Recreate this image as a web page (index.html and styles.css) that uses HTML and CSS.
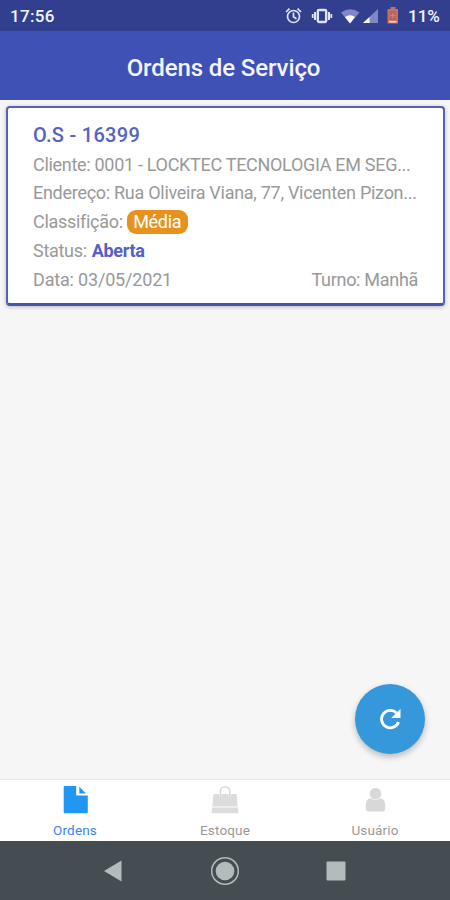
FILE: index.html
```html
<!DOCTYPE html>
<html lang="pt-BR">
<head>
<meta charset="utf-8">
<title>Ordens de Serviço</title>
<link rel="stylesheet" href="styles.css">
</head>
<body>
<div class="app">
  <div class="status">
    <span class="clock">17:56</span>
    <svg class="status-icons" width="120" height="22" viewBox="284 5 120 22">
      <g fill="none" stroke="#dfe3f6" stroke-width="1.7">
        <circle cx="293.5" cy="16.5" r="6"/>
        <path d="M293.5 12.5v4.300l3 2M286 12l3.500-3.300M301 12l-3.500-3.300"/>
        <rect x="317.800" y="10" width="8.400" height="12" rx="1.200" stroke-width="2.400"/>
        <path d="M315 12v8M329 12v8" stroke-width="2"/>
        <path d="M312.700 14v4M331.300 14v4" stroke-width="1.800"/>
      </g>
      <path d="M341 12.500Q350 6 359.500 12.500L350 23.500z" fill="#7f88c4"/>
      <path d="M345 17Q350 13.500 355 17L350 23.500z" fill="#fff"/>
      <path d="M378 9v14h-15z" fill="#7f88c4"/>
      <path d="M369.500 17v6H363z" fill="#fff"/>
      <path d="M390.500 7h5v2h2.500v14.500h-10.500V9h3z" fill="#c9705f"/>
      <path d="M389.500 11h6.500v9h-6.500z" fill="#a8676e"/>
      <path d="M390 15.500h5.500M392.750 12.700v5.600" stroke="#ee7655" stroke-width="1.400"/>
      <path d="M389 21.800h7.500" stroke="#f3ded9" stroke-width="1.400"/>
    </svg>
    <span class="battery">11%</span>
  </div>
  <header class="header"><h1 class="title">Ordens de Serviço</h1></header>
  <main class="content">
    <article class="card">
      <h2 class="order">O.S - 16399</h2>
      <p class="row client">Cliente: 0001 - LOCKTEC TECNOLOGIA EM SEG...</p>
      <p class="row address">Endereço: Rua Oliveira Viana, 77, Vicenten Pizon...</p>
      <p class="row rating"><span>Classifição:</span><span class="badge">Média</span></p>
      <p class="row state"><span>Status:</span><b class="open">Aberta</b></p>
      <p class="row foot"><span class="date">Data: 03/05/2021</span><span class="shift">Turno: Manhã</span></p>
    </article>
    <button class="fab" aria-label="Atualizar">
      <svg width="24" height="24" viewBox="0 0 24 24">
        <path d="M20.500 15A8.700 8.700 0 1 1 18.500 6" fill="none" stroke="#fff" stroke-width="2.900"/>
        <path d="M22.500 1.800v9.200h-9.200z" fill="#fff"/>
      </svg>
    </button>
  </main>
  <nav class="tabs">
    <div class="tab active">
      <svg width="30" height="30" viewBox="0 0 30 30">
        <path d="M4.700 1h11.500v9.600h11.600V27.300q0 1-1 1H4.700q-1 0-1-1V2q0-1 1-1z" fill="#2196f3"/>
        <path d="M19.300 1.800l6.700 6.700h-6.700z" fill="#2196f3"/>
      </svg>
      <span class="label ordens">Ordens</span>
    </div>
    <div class="tab">
      <svg width="30" height="30" viewBox="0 0 30 30">
        <path d="M3.500 9h23l1.200 12.500H2.300z" fill="#dcdcdc"/>
        <path d="M2.100 22.500h25.800l.5 4.800q0 1-1 1H2.600q-1 0-1-1z" fill="#dcdcdc"/>
        <path d="M10.400 9v2.500M19.800 9v2.500" stroke="#f7f7f7" stroke-width="2.800"/>
        <path d="M10.400 11.500V6.500a4.700 4.700 0 0 1 9.400 0V11.500" fill="none" stroke="#d8d8d8" stroke-width="1.600"/>
      </svg>
      <span class="label estoque">Estoque</span>
    </div>
    <div class="tab">
      <svg width="30" height="30" viewBox="0 0 30 30">
        <circle cx="15.500" cy="8.700" r="5.800" fill="#d8d8d8"/>
        <path d="M5.800 23V20q0-6 5-6.800 4.700 3.600 9.400 0 5 .8 5 6.800v3q0 3.500-3 3.500H8.800q-3 0-3-3.500z" fill="#d8d8d8"/>
      </svg>
      <span class="label usuario">Usuário</span>
    </div>
  </nav>
  <div class="system">
    <svg width="20" height="22" viewBox="0 0 20 22"><path d="M1 11L18.500.5v21z" fill="#b3bbbd"/></svg>
    <svg width="30" height="30" viewBox="0 0 30 30"><circle cx="15" cy="15" r="13.300" fill="none" stroke="#b3bbbd" stroke-width="1.500"/><circle cx="15" cy="15" r="9.300" fill="#b3bbbd"/></svg>
    <svg width="20" height="20" viewBox="0 0 20 20"><rect x=".5" y=".5" width="19" height="19" rx="1" fill="#b3bbbd"/></svg>
  </div>
</div>
</body>
</html>
```
FILE: styles.css
```css
* { box-sizing: border-box; }
body, h1, h2, p { margin: 0; }
body { font-family: Roboto, sans-serif; background: #f6f6f6; color: #999; }
.app { width: 450px; height: 900px; display: flex; flex-direction: column; overflow: hidden; }
.app svg { display: block; flex: none; }
.status { height: 31px; flex: none; background: #323f8f; color: #f2f4ff; display: flex; align-items: center; padding: 1px 9px 0 10px; font-size: 17px; font-weight: 500; }
.clock { letter-spacing: .35px; }
.status-icons { margin-left: auto; }
.battery { margin-left: 4px; width: 33px; white-space: nowrap; }
.header { height: 69px; flex: none; background: #3f51b5; display: flex; align-items: center; justify-content: center; padding: 4px 3px 0 0; }
.title { color: #f4f6ff; font-size: 24px; font-weight: 500; line-height: 30px; letter-spacing: -.1px; white-space: nowrap; }
.content { position: relative; flex: 1; padding: 6px 5px 0 6px; }
.card { height: 200px; background: #fff; border: 2px solid #5362b8; border-bottom: 3px solid #4854ae; border-radius: 4px; padding: 14px 25px 0; box-shadow: 0 1px 4px rgba(0,0,0,.25); }
.order { color: #5562c5; font-size: 20px; font-weight: 500; line-height: 26px; height: 29px; letter-spacing: .28px; }
.row { display: flex; align-items: center; height: 28px; font-size: 18px; line-height: 28px; letter-spacing: -.3px; white-space: nowrap; }
.address { letter-spacing: -.28px; }
.rating { height: 29px; gap: 4px; }
.badge { display: flex; align-items: center; justify-content: center; width: 61px; height: 24px; padding-top: 1px; border-radius: 9px; background: #e8921e; color: #fff; }
.state { height: 30px; gap: 5px; }
.open { color: #5260c8; font-weight: 700; }
.foot { justify-content: space-between; }
.date { letter-spacing: -.18px; }
.fab { position: absolute; right: 25px; bottom: 25px; width: 70px; height: 70px; padding: 0; border: 0; border-radius: 50%; background: #3498db; display: flex; align-items: center; justify-content: center; box-shadow: 0 3px 6px rgba(0,0,0,.25); }
.tabs { height: 62px; flex: none; background: #fff; border-top: 1px solid #ececec; display: flex; }
.tab { flex: 1; display: flex; flex-direction: column; align-items: center; padding-top: 5px; color: #999; font-size: 13.5px; }
.label { margin-top: 6px; line-height: 18px; letter-spacing: .15px; }
.active { color: #3b82f6; }
.system { height: 59px; flex: none; background: #454d52; display: flex; align-items: center; justify-content: space-between; padding: 0 104px 0 103px; }
```
